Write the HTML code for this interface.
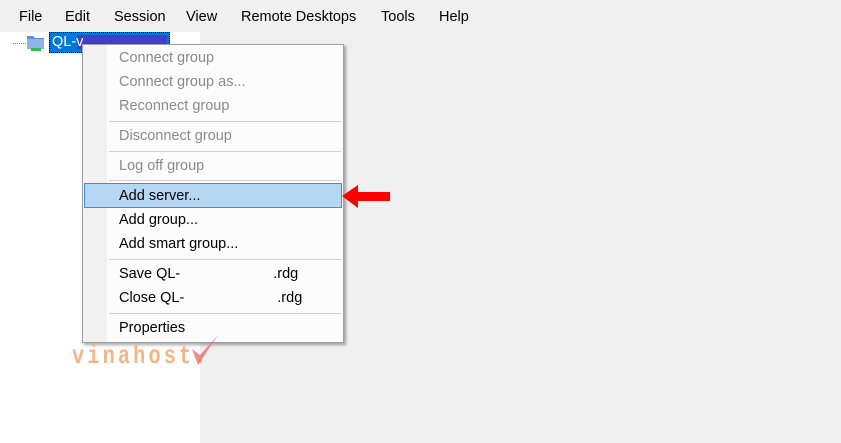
<!DOCTYPE html>
<html><head><meta charset="utf-8"><style>
*{margin:0;padding:0;box-sizing:border-box}
body{width:841px;height:443px;background:#f0f0f0;font-family:"Segoe UI","Liberation Sans",sans-serif;font-size:14.5px;color:#000;position:relative;overflow:hidden}
.mb span{position:absolute;top:9px}
.left{position:absolute;left:0;top:32px;width:200px;height:411px;background:#fff}
.menu{position:absolute;left:82px;top:44px;width:262px;height:299px;background:#fcfcfc;border:1px solid #a0a0a0;box-shadow:2px 2px 3px rgba(0,0,0,.35)}
.gut{position:absolute;left:0;top:0;width:24px;height:100%;background:#f2f2f2}
.it{position:absolute;left:36px;white-space:nowrap}
.dis{color:#8a8a8a}
.sep{position:absolute;left:26px;right:2px;height:1px;background:#d0d0d0}
.hl{position:absolute;left:1px;top:138px;width:258px;height:25px;background:#b5d7f3;border:1px solid #3d8fd6}
</style></head><body>
<div class="mb">
<span style="left:19px">File</span><span style="left:65px">Edit</span><span style="left:114px">Session</span><span style="left:186px">View</span><span style="left:241px">Remote Desktops</span><span style="left:381px">Tools</span><span style="left:439px">Help</span>
</div>
<div class="left"></div>
<div style="position:absolute;left:13px;top:43px;width:13px;border-top:1px dotted #888"></div>
<svg style="position:absolute;left:26px;top:34px" width="20" height="18"><path d="M1 2h6l2 2h9v11H1z" fill="#5b8fd8"/><path d="M1 5h17v10H1z" fill="#8fb4ea"/><rect x="5" y="14" width="10" height="3" fill="#2fbf4a"/></svg>
<div style="position:absolute;left:49px;top:32px;width:121px;height:21px;background:#0078d7;border:1px dotted #000"></div>
<div style="position:absolute;left:77px;top:35px;width:90px;height:14px;background:#3f3fc8"></div>
<span style="position:absolute;left:52px;top:34px;color:#fff">QL-v</span>
<div class="menu">
<div class="gut"></div>
<div class="hl"></div>
<div class="it dis" style="top:5px">Connect group</div>
<div class="it dis" style="top:29px">Connect group as...</div>
<div class="it dis" style="top:53px">Reconnect group</div>
<div class="sep" style="top:76px"></div>
<div class="it dis" style="top:83px">Disconnect group</div>
<div class="sep" style="top:106px"></div>
<div class="it dis" style="top:113px">Log off group</div>
<div class="sep" style="top:135px"></div>
<div class="it" style="top:143px">Add server...</div>
<div class="it" style="top:167px">Add group...</div>
<div class="it" style="top:191px">Add smart group...</div>
<div class="sep" style="top:214px"></div>
<div class="it" style="top:221px">Save QL-<span style="display:inline-block;width:93px"></span>.rdg</div>
<div class="it" style="top:245px">Close QL-<span style="display:inline-block;width:93px"></span>.rdg</div>
<div class="sep" style="top:268px"></div>
<div class="it" style="top:275px">Properties</div>
</div>
<svg style="position:absolute;left:340px;top:183px" width="52" height="26"><path d="M2 13L18 2v7h32v9H18v7z" fill="#f00"/></svg>
<div style="position:absolute;left:72px;top:341px;font-size:26px;font-weight:bold;letter-spacing:4px;color:#f3b58c;font-family:'Liberation Mono',monospace;transform:scaleX(.78);transform-origin:left">vinahost.</div>
<svg style="position:absolute;left:190px;top:333px" width="30" height="34"><path d="M2 16l6 16L28 2 10 22z" fill="#e9706a" opacity=".8"/></svg>
</body></html>
